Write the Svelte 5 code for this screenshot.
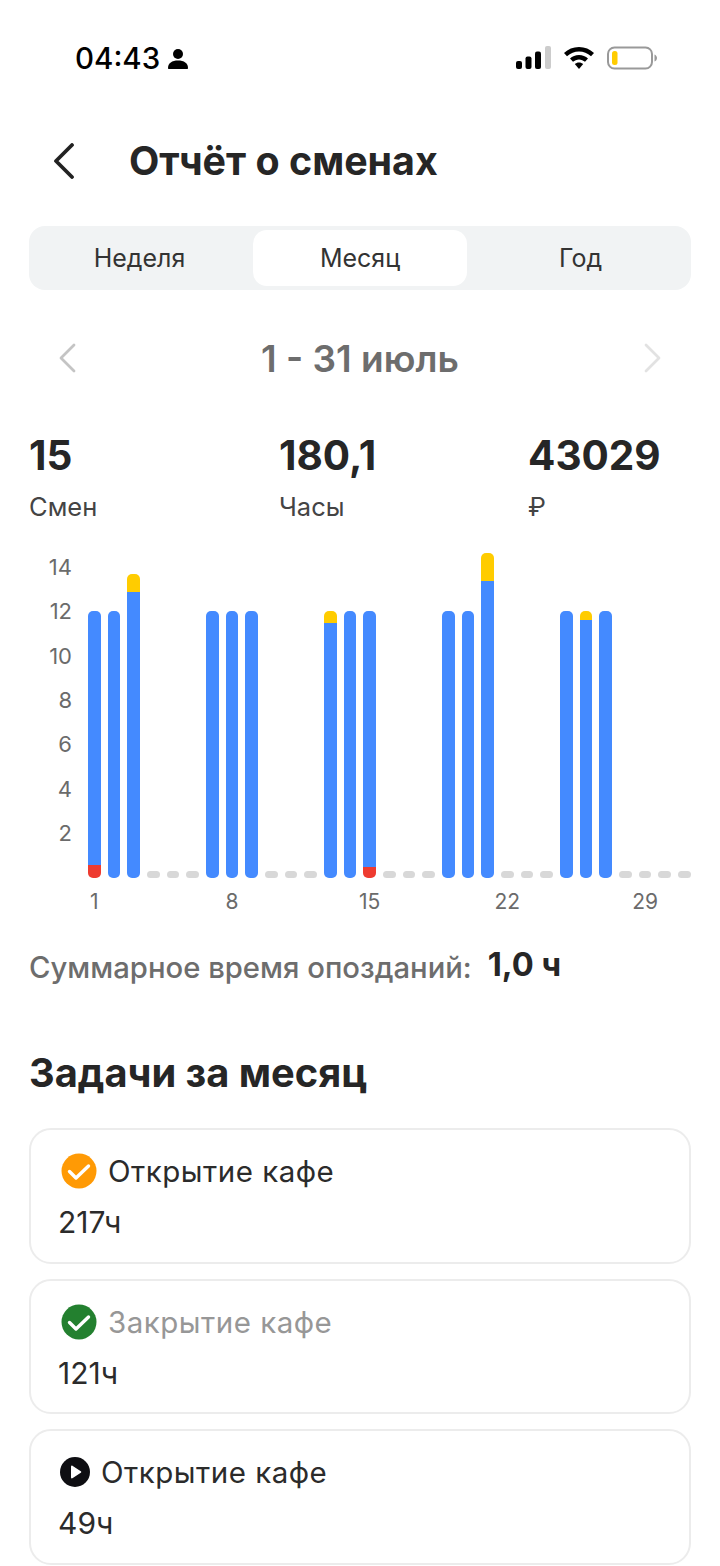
<script lang="ts">
	const scale = 22.25;
	// blue hours, yellow overtime, red lateness per day; null = no shift
	const shifts: Record<number, { blue: number; over?: number; late?: number }> = {
		1: { blue: 11.4, late: 0.6 },
		2: { blue: 12 },
		3: { blue: 12.85, over: 0.8 },
		7: { blue: 12 },
		8: { blue: 12 },
		9: { blue: 12 },
		13: { blue: 11.45, over: 0.55 },
		14: { blue: 12 },
		15: { blue: 11.5, late: 0.5 },
		19: { blue: 12 },
		20: { blue: 12 },
		21: { blue: 13.35, over: 1.25 },
		25: { blue: 12 },
		26: { blue: 11.6, over: 0.4 },
		27: { blue: 12 }
	};
	const days = Array.from({ length: 31 }, (_, i) => i + 1);
	const ticks = [14, 12, 10, 8, 6, 4, 2];
	const stats = [
		{ value: '15', label: 'Смен' },
		{ value: '180,1', label: 'Часы' },
		{ value: '43029', label: '₽' }
	];
	const tasks = [
		{ title: 'Открытие кафе', hours: '217ч', icon: 'orange' },
		{ title: 'Закрытие кафе', hours: '121ч', icon: 'green', muted: true },
		{ title: 'Открытие кафе', hours: '49ч', icon: 'play' }
	];
</script>

<div class="screen">
	<div class="status">
		<div class="clock">
			<span class="time">04:43</span>
			<svg width="20" height="21" viewBox="0 0 20 21"><circle cx="10" cy="6" r="5" fill="#000" /><path d="M0 20c0-5 4-7.500 10-7.500s10 2.500 10 7.500c0 .6-.4 1-1 1H1c-.6 0-1-.4-1-1z" fill="#000" /></svg>
		</div>
		<div class="sys">
			<svg width="35" height="24" viewBox="0 0 35 24">
				<rect x="0" y="15" width="6" height="8" rx="2" fill="#000" />
				<rect x="9.500" y="10.500" width="6" height="12.500" rx="2" fill="#000" />
				<rect x="19" y="5.500" width="6" height="17.500" rx="2" fill="#000" />
				<rect x="29" y="0" width="6" height="23" rx="2" fill="#ccc" />
			</svg>
			<svg width="30" height="22" viewBox="0 0 30 22">
				<path d="M15 0C9 0 4.200 2.300 0 6l3 3.300C6.500 6.200 10.500 4.500 15 4.500s8.500 1.700 12 4.800L30 6C25.800 2.300 21 0 15 0z" fill="#000" />
				<path d="M15 8c-3.500 0-6.700 1.300-9 3.600l3 3.200c1.600-1.500 3.700-2.400 6-2.400s4.400.9 6 2.400l3-3.200C21.700 9.300 18.500 8 15 8z" fill="#000" />
				<path d="M15 15.500c-1.700 0-3.100.6-4.200 1.600L15 22l4.200-4.900c-1.100-1-2.500-1.600-4.200-1.600z" fill="#000" />
			</svg>
			<svg width="50" height="24" viewBox="0 0 50 24">
				<rect x="1" y="1.500" width="44" height="21" rx="6.500" fill="#fff" stroke="#999" stroke-width="2" />
				<rect x="5" y="5" width="5.500" height="14" rx="2.500" fill="#ffcc00" />
				<path d="M47.500 8.500c1.500.5 2.500 2 2.500 3.500s-1 3-2.500 3.500z" fill="#999" />
			</svg>
		</div>
	</div>

	<header class="top">
		<svg width="24" height="36" viewBox="0 0 24 36"><path d="M21 2 5 18l16 16" fill="none" stroke="#222" stroke-width="3.800" stroke-linecap="round" stroke-linejoin="round" /></svg>
		<h1>Отчёт о сменах</h1>
	</header>

	<div class="tabs">
		<button class="first">Неделя</button>
		<button class="active">Месяц</button>
		<button class="last">Год</button>
	</div>

	<div class="range">
		<svg width="18" height="30" viewBox="0 0 18 30"><path d="M16 2 3 15l13 13" fill="none" stroke="#c4c4c4" stroke-width="2.800" stroke-linecap="round" stroke-linejoin="round" /></svg>
		<span>1 - 31 июль</span>
		<svg width="18" height="30" viewBox="0 0 18 30"><path d="m2 2 13 13L2 28" fill="none" stroke="#e2e2e2" stroke-width="2.800" stroke-linecap="round" stroke-linejoin="round" /></svg>
	</div>

	<div class="stats">
		{#each stats as s}
			<div class="stat">
				<div class="value">{s.value}</div>
				<div class="label">{s.label}</div>
			</div>
		{/each}
	</div>

	<div class="chart">
		<div class="yaxis">
			{#each ticks as t}
				<span>{t}</span>
			{/each}
		</div>
		<div class="plot">
			{#each days as d}
				{@const s = shifts[d]}
				<div class="day">
					<div class="slot">
						{#if s}
							<div class="bar">
								{#if s.over}<i class="over" style="height:{s.over * scale}px"></i>{/if}
								<i class="blue" style="height:{s.blue * scale}px"></i>
								{#if s.late}<i class="late" style="height:{s.late * scale}px"></i>{/if}
							</div>
						{:else}
							<div class="off"></div>
						{/if}
					</div>
					<span class="tick">{(d - 1) % 7 === 0 ? d : ''}</span>
				</div>
			{/each}
		</div>
	</div>

	<div class="late-row">
		<span>Суммарное время опозданий:</span>
		<b>1,0 ч</b>
	</div>

	<h2>Задачи за месяц</h2>

	<div class="tasks">
		{#each tasks as t}
			<div class="task">
				<div class="task-title" class:play={t.icon === 'play'}>
					{#if t.icon === 'play'}
						<svg width="30" height="30" viewBox="0 0 30 30"><circle cx="15" cy="15" r="15" fill="#0e0e12" /><path d="M11 9.500c0-.8.800-1.200 1.400-.8l8.400 5.500c.6.400.6 1.200 0 1.600l-8.400 5.500c-.6.400-1.400 0-1.400-.8z" fill="#fff" /></svg>
					{:else}
						<svg width="36" height="36" viewBox="0 0 36 36"><circle cx="18" cy="18" r="17.500" fill={t.icon === 'orange' ? '#ff9a05' : '#23802f'} /><path d="m8.500 18.500 6.500 6.500 12.500-12" fill="none" stroke="#fff" stroke-width="3.400" stroke-linecap="round" stroke-linejoin="round" /></svg>
					{/if}
					<span class:muted={t.muted}>{t.title}</span>
				</div>
				<div class="hours">{t.hours}</div>
			</div>
		{/each}
	</div>
</div>

<style>
	:global(body) {
		margin: 0;
		background: #fff;
	}
	.screen {
		width: 720px;
		height: 1566px;
		overflow: hidden;
		box-sizing: border-box;
		padding: 0 29px;
		font-family: Inter, 'Noto Sans', sans-serif;
		color: #262626;
	}
	.status {
		display: flex;
		justify-content: space-between;
		align-items: center;
		height: 40px;
		padding: 38px 34px 1px 46px;
	}
	.clock {
		display: flex;
		align-items: center;
		gap: 8px;
	}
	.time {
		font-size: 29.500px;
		font-weight: 500;
		color: #000;
		line-height: 40px;
	}
	.sys {
		display: flex;
		align-items: center;
		gap: 13px;
	}
	.top {
		display: flex;
		align-items: center;
		gap: 54px;
		height: 60px;
		margin-top: 52px;
		padding-left: 22px;
	}
	h1 {
		margin: 0;
		font-size: 39.400px;
		font-weight: 700;
		color: #262626;
	}
	.tabs {
		display: flex;
		align-items: stretch;
		height: 64px;
		margin-top: 35px;
		padding: 4px 3px;
		box-sizing: border-box;
		background: #f1f3f4;
		border-radius: 16px;
	}
	.tabs button {
		flex: 1;
		border: none;
		background: transparent;
		border-radius: 14px;
		font: 400 25px Inter, sans-serif;
		color: #333;
		padding: 0;
	}
	.tabs .first {
		padding-right: 6px;
	}
	.tabs .last {
		padding-left: 6px;
	}
	.tabs .active {
		flex: none;
		width: 214px;
		background: #fff;
	}
	.range {
		display: flex;
		align-items: center;
		justify-content: space-between;
		height: 44px;
		margin-top: 46px;
		padding: 0 29px;
	}
	.range span {
		font-size: 37px;
		font-weight: 600;
		color: #6d6d6d;
	}
	.stats {
		display: grid;
		grid-template-columns: 250px 249px 1fr;
		margin-top: 51px;
	}
	.value {
		font-size: 40.500px;
		font-weight: 700;
		line-height: 50px;
		color: #262626;
	}
	.label {
		font-size: 25.500px;
		color: #444;
		line-height: 30px;
		margin-top: 11px;
	}
	.chart {
		display: flex;
		margin-top: 25px;
		height: 370px;
	}
	.yaxis {
		display: flex;
		flex-direction: column;
		align-items: flex-end;
		width: 43px;
		margin-right: 16px;
		padding-top: 5px;
		box-sizing: border-box;
		font-size: 22px;
		color: #6b6b6b;
	}
	.yaxis span {
		height: 44.350px;
		line-height: 30px;
	}
	.plot {
		display: flex;
		justify-content: space-between;
		width: 603px;
	}
	.day {
		display: flex;
		flex-direction: column;
		align-items: center;
		width: 12.500px;
	}
	.slot {
		display: flex;
		flex-direction: column;
		justify-content: flex-end;
		height: 331px;
		width: 100%;
	}
	.bar {
		display: flex;
		flex-direction: column;
		border-radius: 5px;
		overflow: hidden;
	}
	.bar i {
		display: block;
	}
	.blue {
		background: #448aff;
	}
	.over {
		background: #ffcc00;
	}
	.late {
		background: #ee3b30;
	}
	.off {
		height: 7px;
		border-radius: 4px;
		background: #d8d8d8;
	}
	.tick {
		white-space: nowrap;
		font-size: 21px;
		line-height: 30px;
		margin-top: 9px;
		color: #6b6b6b;
		min-height: 30px;
	}
	.late-row {
		display: flex;
		align-items: flex-start;
		gap: 16px;
		height: 40px;
		margin-top: 29px;
	}
	.late-row span {
		font-size: 29.250px;
		font-weight: 500;
		line-height: 40px;
		margin-top: 2px;
		color: #6d6d6d;
	}
	.late-row b {
		font-size: 32.700px;
		font-weight: 700;
		line-height: 36px;
		color: #262626;
	}
	h2 {
		margin: 60px 0 0;
		font-size: 39.800px;
		font-weight: 700;
		color: #262626;
		line-height: 54px;
	}
	.tasks {
		display: flex;
		flex-direction: column;
		gap: 15px;
		margin-top: 28.300px;
	}
	.task {
		height: 135.500px;
		box-sizing: border-box;
		border: 2px solid #ececec;
		border-radius: 22px;
		padding: 22px 27px 0;
	}
	.task-title {
		display: flex;
		align-items: center;
		gap: 11px;
		height: 38px;
		padding-left: 3px;
		font-size: 29.500px;
		color: #2b2b2b;
		letter-spacing: 0.5px;
	}
	.task-title.play {
		padding-left: 2px;
	}
	.muted {
		color: #979797;
	}
	.hours {
		font-size: 30px;
		color: #2b2b2b;
		line-height: 36px;
		margin-top: 14px;
	}
</style>
